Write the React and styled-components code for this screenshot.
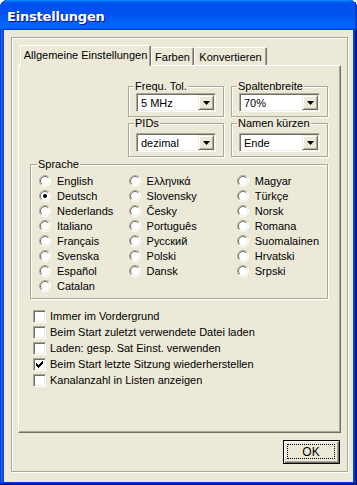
import React from "react";
import styled, { createGlobalStyle } from "styled-components";

const GlobalStyle = createGlobalStyle`
  html, body {
    margin: 0;
    padding: 0;
    background: #fff;
  }
  body {
    font-family: "Liberation Sans", Arial, sans-serif;
    font-size: 11px;
    color: #000;
  }
`;

const Window = styled.div`
  width: 357px;
  height: 485px;
  display: flex;
  flex-direction: column;
  box-sizing: border-box;
  background: #0842d6;
  border-radius: 8px 8px 0 0;
  overflow: hidden;
  box-shadow: inset -1px -1px #00138c, inset 1px 1px #0831d9,
    inset -2px -2px #001ea0, inset 2px 2px #166aee,
    inset -3px -3px #003bda, inset 3px 3px #0855dd;
`;

const TitleBar = styled.div`
  height: 30px;
  flex: none;
  display: flex;
  align-items: center;
  box-sizing: border-box;
  padding: 2px 0 0 7px;
  background: linear-gradient(
    180deg,
    #0997ff,
    #0053ee 8%,
    #0050ee 40%,
    #06f 88%,
    #06f 93%,
    #005bff 95%,
    #003dd7 96%,
    #003dd7
  );
  box-shadow: inset -2px 0 #0040c8;
`;

const Title = styled.span`
  font-family: "DejaVu Sans", sans-serif;
  font-weight: bold;
  font-size: 13px;
  color: #fff;
  text-shadow: 1px 1px #0f1089;
  letter-spacing: -0.2px;
`;

const Client = styled.div`
  flex: 1;
  margin: 0 4px 3px 4px;
  background: #ece9d8;
  display: flex;
  flex-direction: column;
  padding: 7px 5px 10px 7px;
  box-sizing: border-box;
`;

const Frame = styled.div`
  flex: 1;
  display: flex;
  flex-direction: column;
  border: 1px solid #aca899;
  box-shadow: inset 1px 1px #fff, 1px 1px #fff;
  padding: 7px 6px 7px 6px;
`;

const TabStrip = styled.div`
  height: 20px;
  flex: none;
  display: flex;
  align-items: flex-end;
  padding-left: 2px;
`;

const Tab = styled.div`
  position: relative;
  z-index: ${(p) => (p.$active ? 2 : 1)};
  width: ${(p) => p.$width}px;
  height: ${(p) => (p.$active ? 21 : 18)}px;
  margin-bottom: ${(p) => (p.$active ? -1 : 0)}px;
  box-sizing: border-box;
  background: #ece9d8;
  border-left: 1px solid #fff;
  border-top: 1px solid #fff;
  border-right: 1px solid #716f64;
  border-radius: 2px 2px 0 0;
  box-shadow: inset -1px 0 #aca899;
  display: flex;
  align-items: center;
  justify-content: center;
  padding-bottom: ${(p) => (p.$active ? 2 : 0)}px;
  white-space: nowrap;
`;

const Panel = styled.div`
  flex: 1;
  display: flex;
  flex-direction: column;
  border: 1px solid;
  border-color: #fff #716f64 #716f64 #fff;
  box-shadow: inset -1px -1px #aca899;
  padding: 14px 12px 0 11px;
`;

const TopGroups = styled.div`
  align-self: flex-end;
  display: grid;
  grid-template-columns: 96px 97px;
  column-gap: 7px;
  row-gap: 0;
`;

const Group = styled.fieldset`
  margin: 0;
  min-width: 0;
  border: 1px solid #aca899;
  box-shadow: inset 1px 1px #fff, 1px 1px #fff;
  padding: ${(p) => p.$pad || "0 7px 4px 7px"};
`;

const Legend = styled.legend`
  padding: 0 1px;
  margin-left: -2px;
  line-height: 13px;
  background: #ece9d8;
`;

const Combo = styled.div`
  height: 19px;
  box-sizing: border-box;
  display: flex;
  align-items: center;
  background: #fff;
  border: 1px solid;
  border-color: #aca899 #fff #fff #aca899;
  box-shadow: inset 1px 1px #716f64, inset -1px -1px #f1efe2;
  padding: 1px;
`;

const ComboText = styled.span`
  flex: 1;
  padding-left: 3px;
  white-space: nowrap;
`;

const ComboButton = styled.div`
  width: 16px;
  height: 15px;
  box-sizing: border-box;
  background: #ece9d8;
  border: 1px solid;
  border-color: #f1efe2 #716f64 #716f64 #f1efe2;
  box-shadow: inset 1px 1px #fff, inset -1px -1px #aca899;
  display: flex;
  align-items: center;
  justify-content: center;
`;

const LanguageGroup = styled(Group)`
  margin-top: 1px;
  display: flex;
`;

const LangColumn = styled.div`
  width: ${(p) => (p.$width ? `${p.$width}px` : "auto")};
  display: flex;
  flex-direction: column;
`;

const OptionRow = styled.div`
  height: ${(p) => p.$h || 15}px;
  display: flex;
  align-items: center;
  gap: ${(p) => p.$gap || 6}px;
  white-space: nowrap;
`;

const Options = styled.div`
  margin: 9px 0 0 3px;
  display: flex;
  flex-direction: column;
`;

const CheckBox = styled.span`
  width: 13px;
  height: 13px;
  flex: none;
  box-sizing: border-box;
  background: #fff;
  border: 1px solid;
  border-color: #aca899 #fff #fff #aca899;
  box-shadow: inset 1px 1px #716f64, inset -1px -1px #f1efe2;
  padding: 2px;
  display: flex;
`;

const ButtonRow = styled.div`
  flex: none;
  display: flex;
  justify-content: flex-end;
  margin-top: 7px;
  padding-right: 1px;
`;

const Button = styled.div`
  width: 57px;
  height: 24px;
  box-sizing: border-box;
  border: 1px solid #000;
  background: #ece9d8;
  box-shadow: inset 1px 1px #fff, inset -1px -1px #716f64,
    inset -2px -2px #aca899;
  padding: 3px 4px 4px 3px;
  display: flex;
`;

const FocusRing = styled.span`
  flex: 1;
  border: 1px dotted #000;
  display: flex;
  align-items: center;
  justify-content: center;
  font-size: 12px;
`;

function Arrow() {
  return (
    <svg width="7" height="4" viewBox="0 0 7 4">
      <path d="M0 0h7L3.5 4z" fill="#000" />
    </svg>
  );
}

function Radio({ checked }) {
  return (
    <svg width="12" height="12" viewBox="0 0 12 12" style={{ flex: "none" }}>
      <circle cx="6" cy="6" r="5" fill="#fff" />
      <path d="M2.1 9.9A5.5 5.5 0 0 1 9.9 2.1" stroke="#aca899" fill="none" />
      <path d="M9.9 2.1A5.5 5.5 0 0 1 2.1 9.9" stroke="#fff" fill="none" />
      <path d="M2.8 9.2A4.5 4.5 0 0 1 9.2 2.8" stroke="#716f64" fill="none" />
      <path d="M9.2 2.8A4.5 4.5 0 0 1 2.8 9.2" stroke="#f1efe2" fill="none" />
      {checked && <circle cx="6" cy="6" r="2" fill="#000" />}
    </svg>
  );
}

const checkCols = [
  [2, 4],
  [3, 5],
  [4, 6],
  [3, 5],
  [2, 4],
  [1, 3],
  [0, 2],
];

function Check() {
  return (
    <svg width="7" height="7" viewBox="0 0 7 7">
      {checkCols.map(([a, b], i) => (
        <rect key={i} x={i} y={a} width="1" height={b - a + 1} fill="#000" />
      ))}
    </svg>
  );
}

function Dropdown({ value }) {
  return (
    <Combo>
      <ComboText>{value}</ComboText>
      <ComboButton>
        <Arrow />
      </ComboButton>
    </Combo>
  );
}

const languages = [
  ["English", "Deutsch", "Nederlands", "Italiano", "Français", "Svenska", "Español", "Catalan"],
  ["Ελληνικά", "Slovensky", "Česky", "Português", "Русский", "Polski", "Dansk"],
  ["Magyar", "Türkçe", "Norsk", "Romana", "Suomalainen", "Hrvatski", "Srpski"],
];

const colWidths = [91, 110, null];

const options = [
  ["Immer im Vordergrund", false],
  ["Beim Start zuletzt verwendete Datei laden", false],
  ["Laden: gesp. Sat Einst. verwenden", false],
  ["Beim Start letzte Sitzung wiederherstellen", true],
  ["Kanalanzahl in Listen anzeigen", false],
];

export default function App() {
  return (
    <>
      <GlobalStyle />
      <Window>
        <TitleBar>
          <Title>Einstellungen</Title>
        </TitleBar>
        <Client>
          <Frame>
            <TabStrip>
              <Tab $active $width={131}>Allgemeine Einstellungen</Tab>
              <Tab $width={43}>Farben</Tab>
              <Tab $width={73}>Konvertieren</Tab>
            </TabStrip>
            <Panel>
              <TopGroups>
                <Group>
                  <Legend>Frequ. Tol.</Legend>
                  <Dropdown value="5 MHz" />
                </Group>
                <Group>
                  <Legend>Spaltenbreite</Legend>
                  <Dropdown value="70%" />
                </Group>
                <Group $pad="3px 7px 4px 7px">
                  <Legend>PIDs</Legend>
                  <Dropdown value="dezimal" />
                </Group>
                <Group $pad="3px 7px 4px 7px">
                  <Legend>Namen kürzen</Legend>
                  <Dropdown value="Ende" />
                </Group>
              </TopGroups>
              <LanguageGroup $pad="2px 8px 5px 8px">
                <Legend>Sprache</Legend>
                {languages.map((col, ci) => (
                  <LangColumn key={ci} $width={colWidths[ci]}>
                    {col.map((lang) => (
                      <OptionRow key={lang}>
                        <Radio checked={lang === "Deutsch"} />
                        <span>{lang}</span>
                      </OptionRow>
                    ))}
                  </LangColumn>
                ))}
              </LanguageGroup>
              <Options>
                {options.map(([label, on]) => (
                  <OptionRow key={label} $h={16} $gap={4}>
                    <CheckBox>{on && <Check />}</CheckBox>
                    <span>{label}</span>
                  </OptionRow>
                ))}
              </Options>
            </Panel>
            <ButtonRow>
              <Button>
                <FocusRing>OK</FocusRing>
              </Button>
            </ButtonRow>
          </Frame>
        </Client>
      </Window>
    </>
  );
}
